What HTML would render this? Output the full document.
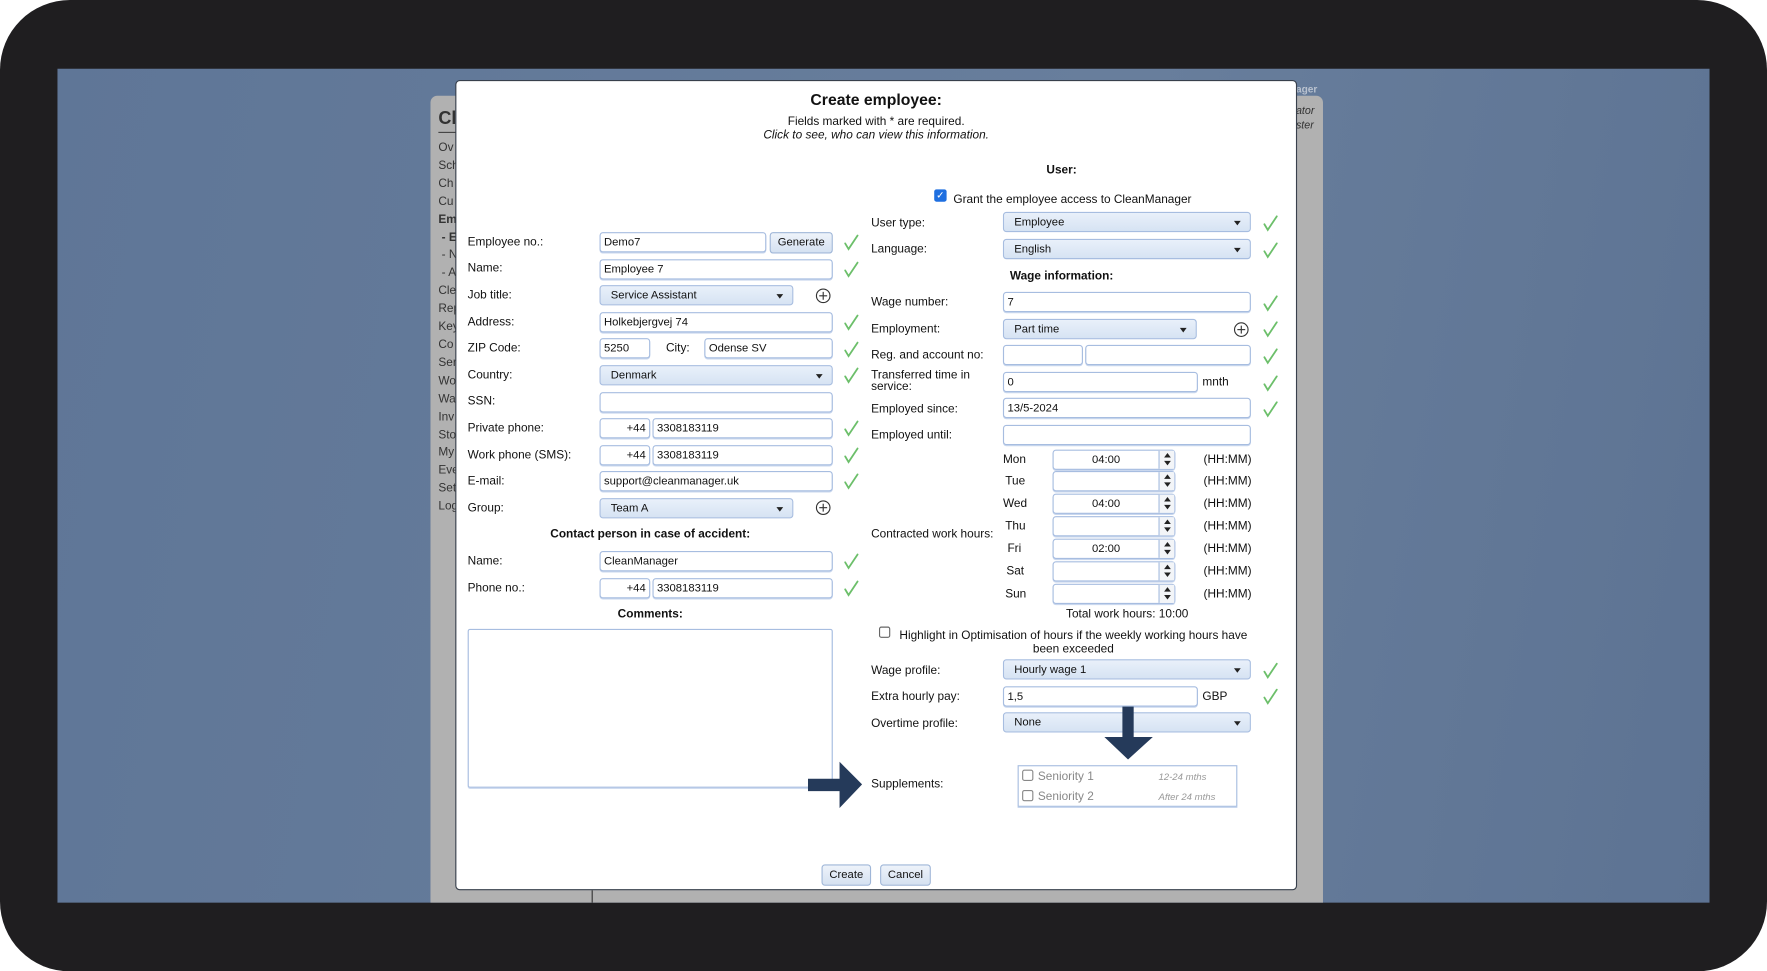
<!DOCTYPE html>
<html><head><meta charset="utf-8"><style>
*{box-sizing:border-box;margin:0;padding:0}
html,body{width:1767px;height:971px;overflow:hidden;background:#fff}
#w{position:absolute;left:0;top:0;width:1568px;height:862px;transform:scale(1.12691);transform-origin:0 0;font-family:"Liberation Sans",sans-serif;font-size:10.5px;color:#111}
.a{position:absolute;white-space:nowrap}
.in{position:absolute;height:18px;border:1px solid #a7bde0;border-radius:3px;background:#fff;padding:0 3px;line-height:18px;font-size:10px;box-shadow:0 1px 0 #c9d7ee}
.sel{position:absolute;height:18px;border:1px solid #a7bde0;border-radius:3px;background:linear-gradient(#e9f0fa,#d6e3f3);padding:0 9px;line-height:18px;font-size:10px}
.sel:after{content:"";position:absolute;right:8px;top:7px;border-left:3px solid transparent;border-right:3px solid transparent;border-top:4px solid #222}
.pl{position:absolute;width:13px;height:13px;border:1.3px solid #333;border-radius:50%}
.pl:before{content:"";position:absolute;left:5px;top:2px;width:1.4px;height:7px;background:#333}
.pl:after{content:"";position:absolute;left:2px;top:5px;width:7px;height:1.4px;background:#333}
.sp{position:absolute;right:0;top:0;width:14px;height:16px;border-left:1px solid #a7bde0;background:#f3f5f8}
.sp:before{content:"";position:absolute;left:4px;top:2px;border-left:3px solid transparent;border-right:3px solid transparent;border-bottom:4px solid #222}
.sp:after{content:"";position:absolute;left:4px;top:9px;border-left:3px solid transparent;border-right:3px solid transparent;border-top:4px solid #222}
.b{font-weight:bold}
.btn{position:absolute;height:19px;border:1px solid #9fb6d8;border-radius:3px;background:linear-gradient(#eef3fa,#d5e1f1);line-height:18px;text-align:center;font-size:10px}
</style></head><body><div id="w">
<div class="a" style="left:0;top:0;width:1568px;height:862px;background:#1f1e20;border-radius:62px"></div>
<div class="a" style="left:51px;top:61px;width:1466px;height:740px;background:linear-gradient(100deg,#5f7697 0%,#687e9c 60%,#5d7393 100%)"></div>
<div class="a" style="left:382px;top:85px;width:792px;height:716px;background:#b1b1b1;border-radius:6px 6px 0 0"></div>
<div class="a b" style="left:389px;top:97px;font-size:16px;color:#333">Cl</div>
<div class="a" style="left:389px;top:117px;width:20px;height:1px;background:#444"></div>
<div class="a" style="left:389px;top:124px;color:#333;line-height:15.9px;font-size:10.5px">Ov<br>Sch<br>Ch<br>Cu<br><b>Em</b><br><b>&nbsp;- E</b><br>&nbsp;- N<br>&nbsp;- A<br>Cle<br>Rep<br>Key<br>Co<br>Ser<br>Wo<br>Wa<br>Inv<br>Sto<br>My<br>Eve<br>Set<br>Log</div>
<div class="a" style="left:525px;top:790px;width:1px;height:11px;background:#333"></div>
<div class="a b" style="left:1150px;top:74px;color:#b9c2cf;font-size:9px">ager</div>
<div class="a" style="left:1150px;top:93px;color:#333;font-style:italic;font-size:9.5px">ator</div>
<div class="a" style="left:1150px;top:106px;color:#333;font-style:italic;font-size:9.5px">ster</div>
<!-- modal -->
<div class="a" style="left:404px;top:71px;width:747px;height:719px;background:#fff;border:1px solid #38404c;border-radius:4px"></div>
<div class="a b" style="left:404px;width:747px;top:80px;text-align:center;font-size:14px">Create employee:</div>
<div class="a" style="left:404px;width:747px;top:102px;text-align:center">Fields marked with * are required.</div>
<div class="a" style="left:404px;width:747px;top:114px;text-align:center;font-style:italic">Click to see, who can view this information.</div>

<!-- left -->
<div class="a" style="left:415px;top:209px">Employee no.:</div>
<div class="in" style="left:532px;top:206px;width:148px">Demo7</div>
<div class="btn" style="left:683px;top:206px;width:56px">Generate</div>
<div class="a" style="left:415px;top:232px">Name:</div>
<div class="in" style="left:532px;top:230px;width:207px">Employee 7</div>
<div class="a" style="left:415px;top:256px">Job title:</div>
<div class="sel" style="left:532px;top:253px;width:172px">Service Assistant</div>
<div class="pl" style="left:724px;top:256px"></div>
<div class="a" style="left:415px;top:280px">Address:</div>
<div class="in" style="left:532px;top:277px;width:207px">Holkebjergvej 74</div>
<div class="a" style="left:415px;top:303px">ZIP Code:</div>
<div class="in" style="left:532px;top:300px;width:45px">5250</div>
<div class="a" style="left:591px;top:303px">City:</div>
<div class="in" style="left:625px;top:300px;width:114px">Odense SV</div>
<div class="a" style="left:415px;top:327px">Country:</div>
<div class="sel" style="left:532px;top:324px;width:207px">Denmark</div>
<div class="a" style="left:415px;top:350px">SSN:</div>
<div class="in" style="left:532px;top:348px;width:207px"></div>
<div class="a" style="left:415px;top:374px">Private phone:</div>
<div class="in" style="left:532px;top:371px;width:45px;text-align:right">+44</div>
<div class="in" style="left:579px;top:371px;width:160px">3308183119</div>
<div class="a" style="left:415px;top:398px">Work phone (SMS):</div>
<div class="in" style="left:532px;top:395px;width:45px;text-align:right">+44</div>
<div class="in" style="left:579px;top:395px;width:160px">3308183119</div>
<div class="a" style="left:415px;top:421px">E-mail:</div>
<div class="in" style="left:532px;top:418px;width:207px">support@cleanmanager.uk</div>
<div class="a" style="left:415px;top:445px">Group:</div>
<div class="sel" style="left:532px;top:442px;width:172px">Team A</div>
<div class="pl" style="left:724px;top:444px"></div>
<div class="a b" style="left:415px;width:324px;top:468px;text-align:center">Contact person in case of accident:</div>
<div class="a" style="left:415px;top:492px">Name:</div>
<div class="in" style="left:532px;top:489px;width:207px">CleanManager</div>
<div class="a" style="left:415px;top:516px">Phone no.:</div>
<div class="in" style="left:532px;top:513px;width:45px;text-align:right">+44</div>
<div class="in" style="left:579px;top:513px;width:160px">3308183119</div>
<div class="a b" style="left:415px;width:324px;top:539px;text-align:center">Comments:</div>
<div class="a" style="left:415px;top:558px;width:324px;height:141px;border:1px solid #a7bde0;border-radius:2px;box-shadow:0 1px 0 #c9d7ee"></div>

<!-- right -->
<div class="a b" style="left:773px;width:338px;top:145px;text-align:center">User:</div>
<div class="a" style="left:829px;top:168px;width:11px;height:11px;background:#1e6fe0;border-radius:2px;color:#fff;font-size:9px;line-height:11px;text-align:center">✓</div>
<div class="a" style="left:846px;top:171px">Grant the employee access to CleanManager</div>
<div class="a" style="left:773px;top:192px">User type:</div>
<div class="sel" style="left:890px;top:188px;width:220px">Employee</div>
<div class="a" style="left:773px;top:215px">Language:</div>
<div class="sel" style="left:890px;top:212px;width:220px">English</div>
<div class="a b" style="left:773px;width:338px;top:239px;text-align:center">Wage information:</div>
<div class="a" style="left:773px;top:262px">Wage number:</div>
<div class="in" style="left:890px;top:259px;width:220px">7</div>
<div class="a" style="left:773px;top:286px">Employment:</div>
<div class="sel" style="left:890px;top:283px;width:172px">Part time</div>
<div class="pl" style="left:1095px;top:286px"></div>
<div class="a" style="left:773px;top:309px">Reg. and account no:</div>
<div class="in" style="left:890px;top:306px;width:71px"></div>
<div class="in" style="left:963px;top:306px;width:147px"></div>
<div class="a" style="left:773px;top:328px;line-height:10px">Transferred time in<br>service:</div>
<div class="in" style="left:890px;top:330px;width:173px">0</div>
<div class="a" style="left:1067px;top:333px">mnth</div>
<div class="a" style="left:773px;top:357px">Employed since:</div>
<div class="in" style="left:890px;top:353px;width:220px">13/5-2024</div>
<div class="a" style="left:773px;top:380px">Employed until:</div>
<div class="in" style="left:890px;top:377px;width:220px"></div>

<div class="a" style="left:773px;top:468px">Contracted work hours:</div>
<div class="a" style="left:890px;top:402px">Mon</div><div class="in" style="left:934px;top:399px;width:109px;text-align:center;padding-right:17px">04:00<span class="sp"></span></div><div class="a" style="left:1068px;top:402px">(HH:MM)</div>
<div class="a" style="left:892px;top:421px">Tue</div><div class="in" style="left:934px;top:418px;width:109px"><span class="sp"></span></div><div class="a" style="left:1068px;top:421px">(HH:MM)</div>
<div class="a" style="left:890px;top:441px">Wed</div><div class="in" style="left:934px;top:438px;width:109px;text-align:center;padding-right:17px">04:00<span class="sp"></span></div><div class="a" style="left:1068px;top:441px">(HH:MM)</div>
<div class="a" style="left:892px;top:461px">Thu</div><div class="in" style="left:934px;top:458px;width:109px"><span class="sp"></span></div><div class="a" style="left:1068px;top:461px">(HH:MM)</div>
<div class="a" style="left:894px;top:481px">Fri</div><div class="in" style="left:934px;top:478px;width:109px;text-align:center;padding-right:17px">02:00<span class="sp"></span></div><div class="a" style="left:1068px;top:481px">(HH:MM)</div>
<div class="a" style="left:893px;top:501px">Sat</div><div class="in" style="left:934px;top:498px;width:109px"><span class="sp"></span></div><div class="a" style="left:1068px;top:501px">(HH:MM)</div>
<div class="a" style="left:892px;top:521px">Sun</div><div class="in" style="left:934px;top:518px;width:109px"><span class="sp"></span></div><div class="a" style="left:1068px;top:521px">(HH:MM)</div>
<div class="a" style="left:946px;top:539px">Total work hours: 10:00</div>
<div class="a" style="left:780px;top:556px;width:10px;height:10px;border:1px solid #666;border-radius:2px"></div>
<div class="a" style="left:790px;width:325px;top:558px;text-align:center;white-space:normal;line-height:12px">Highlight in Optimisation of hours if the weekly working hours have been exceeded</div>
<div class="a" style="left:773px;top:589px">Wage profile:</div>
<div class="sel" style="left:890px;top:585px;width:220px">Hourly wage 1</div>
<div class="a" style="left:773px;top:612px">Extra hourly pay:</div>
<div class="in" style="left:890px;top:609px;width:173px">1,5</div>
<div class="a" style="left:1067px;top:612px">GBP</div>
<div class="a" style="left:773px;top:636px">Overtime profile:</div>
<div class="sel" style="left:890px;top:632px;width:220px">None</div>
<div class="a" style="left:773px;top:690px">Supplements:</div>
<div class="a" style="left:903px;top:679px;width:195px;height:37px;border:1px solid #a7bde0;box-shadow:0 1px 0 #c9d7ee"></div>
<div class="a" style="left:907px;top:683px;width:10px;height:10px;border:1px solid #888;border-radius:2px"></div>
<div class="a" style="left:921px;top:683px;color:#888">Seniority 1</div>
<div class="a" style="left:1028px;top:684px;color:#999;font-style:italic;font-size:8.5px">12-24 mths</div>
<div class="a" style="left:907px;top:701px;width:10px;height:10px;border:1px solid #888;border-radius:2px"></div>
<div class="a" style="left:921px;top:701px;color:#888">Seniority 2</div>
<div class="a" style="left:1028px;top:702px;color:#999;font-style:italic;font-size:8.5px">After 24 mths</div>

<div class="btn" style="left:729px;top:767px;width:44px">Create</div>
<div class="btn" style="left:781px;top:767px;width:45px">Cancel</div>

<svg class="a" style="left:0;top:0" width="1568" height="862">
<g fill="none" stroke="#6cbf6a" stroke-width="1.6" stroke-linecap="round">
<path d="M750 216l3 5l8-12"/><path d="M750 240l3 5l8-12"/><path d="M750 287l3 5l8-12"/><path d="M750 311l3 5l8-12"/><path d="M750 334l3 5l8-12"/><path d="M750 381l3 5l8-12"/><path d="M750 405l3 5l8-12"/><path d="M750 428l3 5l8-12"/><path d="M750 499l3 5l8-12"/><path d="M750 523l3 5l8-12"/>
<path d="M1122 199l3 5l8-12"/><path d="M1122 223l3 5l8-12"/><path d="M1122 270l3 5l8-12"/><path d="M1122 293l3 5l8-12"/><path d="M1122 317l3 5l8-12"/><path d="M1122 341l3 5l8-12"/><path d="M1122 364l3 5l8-12"/><path d="M1122 596l3 5l8-12"/><path d="M1122 619l3 5l8-12"/>
</g>
<path fill="#253a5a" d="M717 691h28v-15l20 20l-20 21v-15h-28z"/>
<path fill="#253a5a" d="M996 627h10v27h17l-22 20l-21-20h16z"/>
</svg>
</div></body></html>
